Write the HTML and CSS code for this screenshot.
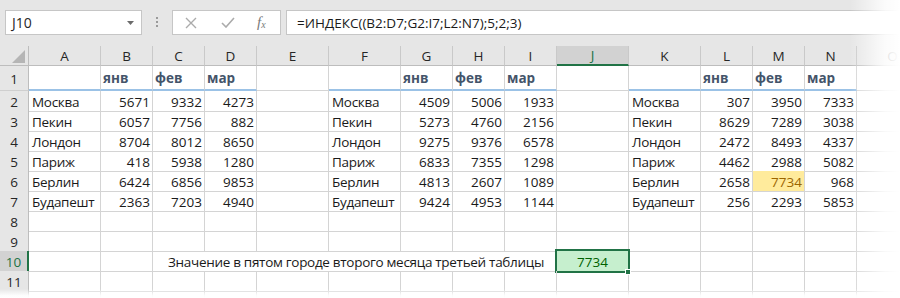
FILE: index.html
```html
<!DOCTYPE html>
<html lang="ru">
<head>
<meta charset="utf-8">
<title>Excel</title>
<link rel="stylesheet" href="styles.css">
</head>
<body>
<div class="app">
  <div class="toolbar">
    <div class="namebox">
      <span>J10</span>
      <svg class="dd" width="7" height="4" viewBox="0 0 7 4"><path d="M0 0H7L3.5 4Z" fill="#6b6b6b"/></svg>
    </div>
    <div class="grip">
      <svg width="3" height="11" viewBox="0 0 3 11"><rect x="0" y="0" width="2" height="2" fill="#9a9a9a"/><rect x="0" y="4" width="2" height="2" fill="#9a9a9a"/><rect x="0" y="8" width="2" height="2" fill="#9a9a9a"/></svg>
    </div>
    <div class="fxbox">
      <svg class="ic-x" width="12" height="12" viewBox="0 0 12 12"><path d="M1 1L11 11M11 1L1 11" stroke="#ababab" stroke-width="1.4" fill="none"/></svg>
      <svg class="ic-ok" width="14" height="11" viewBox="0 0 14 11"><path d="M1 6L5 10L13 1" stroke="#ababab" stroke-width="1.6" fill="none"/></svg>
      <span class="fx"><i>f</i><sub>x</sub></span>
    </div>
    <div class="formula">=ИНДЕКС((B2:D7;G2:I7;L2:N7);5;2;3)</div>
  </div>

  <div class="sheet">
    <div class="row hdr">
      <div class="c corner"><svg width="13" height="13" viewBox="0 0 13 13"><path d="M13 0V13H0Z" fill="#b5b5b5"/></svg></div>
      <div class="c h">A</div><div class="c h">B</div><div class="c h">C</div><div class="c h">D</div>
      <div class="c h">E</div><div class="c h">F</div><div class="c h">G</div><div class="c h">H</div>
      <div class="c h">I</div><div class="c h sel">J</div><div class="c h">K</div><div class="c h">L</div>
      <div class="c h">M</div><div class="c h">N</div><div class="c h">O</div>
    </div>

    <div class="row r1">
      <div class="c rh">1</div>
      <div class="c t"></div><div class="c t th">янв</div><div class="c t th">фев</div><div class="c t th">мар</div>
      <div class="c"></div>
      <div class="c t"></div><div class="c t th">янв</div><div class="c t th">фев</div><div class="c t th">мар</div>
      <div class="c"></div>
      <div class="c t"></div><div class="c t th">янв</div><div class="c t th">фев</div><div class="c t th">мар</div>
      <div class="c"></div>
    </div>

    <div class="row">
      <div class="c rh">2</div>
      <div class="c">Москва</div><div class="c n">5671</div><div class="c n">9332</div><div class="c n">4273</div>
      <div class="c"></div>
      <div class="c">Москва</div><div class="c n">4509</div><div class="c n">5006</div><div class="c n">1933</div>
      <div class="c"></div>
      <div class="c">Москва</div><div class="c n">307</div><div class="c n">3950</div><div class="c n">7333</div>
      <div class="c"></div>
    </div>

    <div class="row">
      <div class="c rh">3</div>
      <div class="c">Пекин</div><div class="c n">6057</div><div class="c n">7756</div><div class="c n">882</div>
      <div class="c"></div>
      <div class="c">Пекин</div><div class="c n">5273</div><div class="c n">4760</div><div class="c n">2156</div>
      <div class="c"></div>
      <div class="c">Пекин</div><div class="c n">8629</div><div class="c n">7289</div><div class="c n">3038</div>
      <div class="c"></div>
    </div>

    <div class="row">
      <div class="c rh">4</div>
      <div class="c">Лондон</div><div class="c n">8704</div><div class="c n">8012</div><div class="c n">8650</div>
      <div class="c"></div>
      <div class="c">Лондон</div><div class="c n">9275</div><div class="c n">9376</div><div class="c n">6578</div>
      <div class="c"></div>
      <div class="c">Лондон</div><div class="c n">2472</div><div class="c n">8493</div><div class="c n">4337</div>
      <div class="c"></div>
    </div>

    <div class="row">
      <div class="c rh">5</div>
      <div class="c">Париж</div><div class="c n">418</div><div class="c n">5938</div><div class="c n">1280</div>
      <div class="c"></div>
      <div class="c">Париж</div><div class="c n">6833</div><div class="c n">7355</div><div class="c n">1298</div>
      <div class="c"></div>
      <div class="c">Париж</div><div class="c n">4462</div><div class="c n">2988</div><div class="c n">5082</div>
      <div class="c"></div>
    </div>

    <div class="row">
      <div class="c rh">6</div>
      <div class="c">Берлин</div><div class="c n">6424</div><div class="c n">6856</div><div class="c n">9853</div>
      <div class="c"></div>
      <div class="c">Берлин</div><div class="c n">4813</div><div class="c n">2607</div><div class="c n">1089</div>
      <div class="c"></div>
      <div class="c">Берлин</div><div class="c n">2658</div><div class="c n neutral">7734</div><div class="c n">968</div>
      <div class="c"></div>
    </div>

    <div class="row">
      <div class="c rh">7</div>
      <div class="c">Будапешт</div><div class="c n">2363</div><div class="c n">7203</div><div class="c n">4940</div>
      <div class="c"></div>
      <div class="c">Будапешт</div><div class="c n">9424</div><div class="c n">4953</div><div class="c n">1144</div>
      <div class="c"></div>
      <div class="c">Будапешт</div><div class="c n">256</div><div class="c n">2293</div><div class="c n">5853</div>
      <div class="c"></div>
    </div>

    <div class="row">
      <div class="c rh">8</div>
      <div class="c"></div><div class="c"></div><div class="c"></div><div class="c"></div><div class="c"></div>
      <div class="c"></div><div class="c"></div><div class="c"></div><div class="c"></div><div class="c"></div>
      <div class="c"></div><div class="c"></div><div class="c"></div><div class="c"></div><div class="c"></div>
    </div>

    <div class="row">
      <div class="c rh">9</div>
      <div class="c"></div><div class="c"></div><div class="c"></div><div class="c"></div><div class="c"></div>
      <div class="c"></div><div class="c"></div><div class="c"></div><div class="c"></div><div class="c"></div>
      <div class="c"></div><div class="c"></div><div class="c"></div><div class="c"></div><div class="c"></div>
    </div>

    <div class="row">
      <div class="c rh rsel">10</div>
      <div class="c"></div><div class="c"></div>
      <div class="c label">Значение в пятом городе второго месяца третьей таблицы</div>
      <div class="c good">7734<span class="handle"></span></div>
      <div class="c"></div><div class="c"></div><div class="c"></div><div class="c"></div><div class="c"></div>
    </div>

    <div class="row">
      <div class="c rh">11</div>
      <div class="c"></div><div class="c"></div><div class="c"></div><div class="c"></div><div class="c"></div>
      <div class="c"></div><div class="c"></div><div class="c"></div><div class="c"></div><div class="c"></div>
      <div class="c"></div><div class="c"></div><div class="c"></div><div class="c"></div><div class="c"></div>
    </div>

    <div class="row">
      <div class="c rh"></div>
      <div class="c"></div><div class="c"></div><div class="c"></div><div class="c"></div><div class="c"></div>
      <div class="c"></div><div class="c"></div><div class="c"></div><div class="c"></div><div class="c"></div>
      <div class="c"></div><div class="c"></div><div class="c"></div><div class="c"></div><div class="c"></div>
    </div>
  </div>

  <div class="fade-right"></div>
  <div class="fade-bottom"></div>
</div>
</body>
</html>
```

FILE: styles.css
```css
* { box-sizing: border-box; }

html, body {
  margin: 0;
  padding: 0;
  background: #fff;
}

body {
  width: 900px;
  height: 298px;
  overflow: hidden;
  font-family: "Open Sans", "Noto Sans", "DejaVu Sans", sans-serif;
  font-size: 13.5px;
  color: #1a1a1a;
}

.app {
  position: relative;
  width: 900px;
  height: 298px;
  overflow: hidden;
}

/* ---------- formula bar ---------- */
.toolbar {
  height: 46px;
  background: #e6e6e6;
  display: flex;
  align-items: flex-start;
  padding: 10px 0 0 5px;
}

.namebox {
  width: 137px;
  height: 25px;
  background: #fff;
  border: 1px solid #c6c6c6;
  display: flex;
  align-items: center;
  justify-content: space-between;
  padding: 0 7px 0 6px;
  font-size: 14px;
  color: #262626;
}

.grip {
  width: 30px;
  height: 25px;
  display: flex;
  align-items: center;
  justify-content: center;
  padding-left: 1px;
}

.fxbox {
  width: 109px;
  height: 25px;
  background: #fff;
  border: 1px solid #c6c6c6;
  display: flex;
  align-items: center;
  padding-left: 12px;
}

.ic-x { margin-right: 24px; }
.ic-ok { margin-right: 22px; }

.fx {
  font-family: "Liberation Serif", serif;
  font-size: 15px;
  color: #7a7a7a;
  line-height: 1;
}
.fx i { font-style: italic; }
.fx sub {
  font-size: 10px;
  font-style: italic;
  vertical-align: -1px;
}

.formula {
  margin-left: 5px;
  flex: 1;
  height: 25px;
  background: #fff;
  border: 1px solid #c6c6c6;
  border-right: none;
  display: flex;
  align-items: center;
  padding-left: 10px;
  font-size: 13.5px;
  color: #1a1a1a;
}

/* ---------- sheet ---------- */
.row {
  display: grid;
  grid-template-columns: 29px 72px 52px 52px 52px 72px 72px 52px 52px 52px 72px 72px 52px 52px 52px 72px;
  height: 20px;
}

.c {
  position: relative;
  border-right: 1px solid #d4d4d4;
  border-bottom: 1px solid #d4d4d4;
  display: flex;
  align-items: center;
  padding: 2px 3px 0 3px;
  white-space: nowrap;
  letter-spacing: -0.3px;
}

.n {
  justify-content: flex-end;
  padding-right: 2px;
  letter-spacing: 0;
}

/* column headers */
.hdr { height: 20px; }
.hdr .c {
  background: #e6e6e6;
  border-right: 1px solid #c9c9c9;
  border-bottom: 1px solid #bdbdbd;
  justify-content: center;
  padding: 0;
  color: #262626;
  letter-spacing: 0;
}
.hdr .corner {
  justify-content: flex-end;
  align-items: flex-end;
  padding: 0 3px 2px 0;
  border-right-color: #bdbdbd;
}
.hdr .sel {
  background: #d2d2d2;
  color: #217346;
  border-bottom: 2px solid #217346;
}

/* row headers */
.rh {
  background: #e6e6e6;
  border-right: 1px solid #bdbdbd;
  border-bottom: 1px solid #cfcfcf;
  justify-content: center;
  padding: 2px 0 0 0;
  color: #262626;
  letter-spacing: 0;
}
.rh.rsel {
  background: #d2d2d2;
  color: #217346;
  border-right: 2px solid #217346;
}

/* row 1 with table headings */
.r1 { height: 25px; }
.r1 .c { padding-top: 1px; }
.r1 .rh { padding-top: 1px; }
.t { border-bottom: 2px solid #9bc2e6; }
.th {
  font-weight: 700;
  color: #44546a;
  padding-left: 2px;
  letter-spacing: 0;
}

/* highlighted cells */
.neutral {
  background: #ffeb9c;
  color: #9c6500;
}

.label {
  grid-column: span 7;
  justify-content: flex-end;
  padding-right: 12px;
}

.good {
  background: #c6efce;
  color: #006100;
  justify-content: center;
  letter-spacing: 0;
}
.good::after {
  content: "";
  position: absolute;
  top: -2px;
  left: -2px;
  right: -2px;
  bottom: -2px;
  border: 2px solid #217346;
  pointer-events: none;
}
.handle {
  position: absolute;
  right: -3px;
  bottom: -4px;
  width: 6px;
  height: 6px;
  background: #217346;
  border: 1px solid #fff;
  z-index: 2;
}

/* fades at the screenshot edges */
.fade-right {
  position: absolute;
  top: 0;
  right: 0;
  width: 50px;
  height: 100%;
  background: linear-gradient(to right, rgba(255,255,255,0) 0%, rgba(255,255,255,0.85) 70%, #fff 100%);
  pointer-events: none;
}
.fade-bottom {
  position: absolute;
  left: 0;
  bottom: 0;
  width: 100%;
  height: 9px;
  background: linear-gradient(to bottom, rgba(255,255,255,0) 0%, rgba(255,255,255,0.9) 70%, #fff 100%);
  pointer-events: none;
}
```
